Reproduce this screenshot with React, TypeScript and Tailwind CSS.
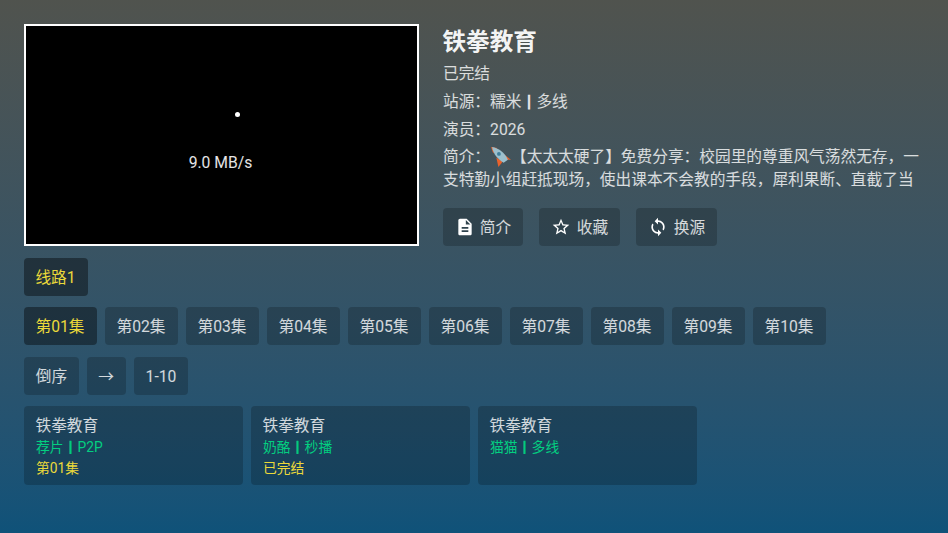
import { MdDescription, MdStarBorder, MdSync } from 'react-icons/md';

const episodes = ['第01集', '第02集', '第03集', '第04集', '第05集', '第06集', '第07集', '第08集', '第09集', '第10集'];

const sources = [
  { title: '铁拳教育', site: ['荐片', 'P2P'], note: '第01集' },
  { title: '铁拳教育', site: ['奶酪', '秒播'], note: '已完结' },
  { title: '铁拳教育', site: ['猫猫', '多线'], note: '' },
];

function Rocket() {
  return (
    <svg viewBox="0 0 20 20" className="inline-block h-[21px] w-[21px] align-[-5px]">
      <path d="M1 1 L7 2 L3 7 Z" fill="#e8622c" />
      <path d="M12 7 L20 13 L13 13 Z" fill="#e8622c" />
      <path d="M6 11 L8 20 L12 15 Z" fill="#e8622c" />
      <path d="M2 1 C8 2 14 6 17 13 L13 16 C8 13 3 8 2 1 Z" fill="#9cc0cd" />
      <circle cx="8.5" cy="7.5" r="1.8" fill="#3f7f9c" />
    </svg>
  );
}

function Chip({ active, className, children }: { active?: boolean; className?: string; children: React.ReactNode }) {
  return (
    <div
      className={`flex h-[38px] items-center justify-center rounded-[4px] ${
        active ? 'bg-black/40 text-[#ebd93a]' : 'bg-black/20 text-white/80'
      } ${className ?? ''}`}
    >
      {children}
    </div>
  );
}

export default function App() {
  return (
    <div
      className="flex h-[533px] w-[948px] flex-col overflow-hidden bg-gradient-to-b from-[#50534e] to-[#0f5279] px-[24px] pt-[24px] text-[15.7px] leading-[23px] text-white/80"
      style={{ fontFamily: 'Roboto, "Noto Sans CJK SC", sans-serif' }}
    >
      {/* Player + details */}
      <div className="flex gap-[24px]">
        <div className="flex h-[222px] w-[395px] shrink-0 flex-col items-center border-2 border-white bg-black pt-[86px]">
          <div className="ml-[31px] h-[5px] w-[5px] rounded-full bg-white" />
          <div className="mt-[34px] pr-[2px] text-white/90">9.0 MB/s</div>
        </div>
        <div className="flex min-w-0 flex-1 flex-col">
          <h1 className="mt-[3px] -ml-[0.5px] h-[30px] text-[23.6px] leading-[30px] font-bold text-white/95">铁拳教育</h1>
          <div className="mt-[3px] h-[28px] leading-[28px]">已完结</div>
          <div className="h-[28px] leading-[28px]">
            站源：糯米<span className="inline-block w-[15px] text-center font-bold [-webkit-text-stroke:0.7px]">|</span>多线
          </div>
          <div className="h-[28px] leading-[28px]">演员：2026</div>
          <p className="mt-[1px] h-[46px] w-[481px] overflow-hidden">
            简介：<Rocket />【太太太硬了】免费分享：校园里的尊重风气荡然无存，一支特勤小组赶抵现场，使出课本不会教的手段，犀利果断、直截了当
          </p>
          <div className="mt-[17px] flex gap-[16px]">
            <Chip className="w-[80px] gap-[5px]">
              <MdDescription className="h-[20px] w-[20px] text-white" />
              简介
            </Chip>
            <Chip className="w-[81px] gap-[6px]">
              <MdStarBorder className="h-[20px] w-[20px] text-white" />
              收藏
            </Chip>
            <Chip className="w-[81px] gap-[6px]">
              <MdSync className="h-[20px] w-[20px] text-white" />
              换源
            </Chip>
          </div>
        </div>
      </div>

      {/* Line */}
      <div className="mt-[12px] flex">
        <Chip active className="w-[64px] pr-[1px]">线路1</Chip>
      </div>

      {/* Episodes */}
      <div className="mt-[11px] flex gap-[8px]">
        {episodes.map((ep, i) => (
          <Chip key={ep} active={i === 0} className="w-[73px] pr-[1px]">{ep}</Chip>
        ))}
      </div>

      {/* Sort */}
      <div className="mt-[12px] flex gap-[8px]">
        <Chip className="w-[55px]">倒序</Chip>
        <Chip className="w-[39px] pr-[1px]">→</Chip>
        <Chip className="w-[54px]">1-10</Chip>
      </div>

      {/* Other sources */}
      <div className="mt-[11px] flex gap-[8px]">
        {sources.map((s) => (
          <div key={s.site[0]} className="h-[79px] w-[219px] rounded-[4px] bg-black/20 px-[12px] pt-[8px]">
            <div className="-ml-[0.5px] h-[23px] leading-[23px]">{s.title}</div>
            <div className="h-[21px] text-[13.8px] leading-[21px] text-[#03cf80]">
              {s.site[0]}
              <span className="inline-block w-[14px] text-center font-bold [-webkit-text-stroke:0.7px]">|</span>
              {s.site[1]}
            </div>
            <div className="h-[21px] text-[13.8px] leading-[21px] text-[#ebd93a]">{s.note}</div>
          </div>
        ))}
      </div>
    </div>
  );
}
